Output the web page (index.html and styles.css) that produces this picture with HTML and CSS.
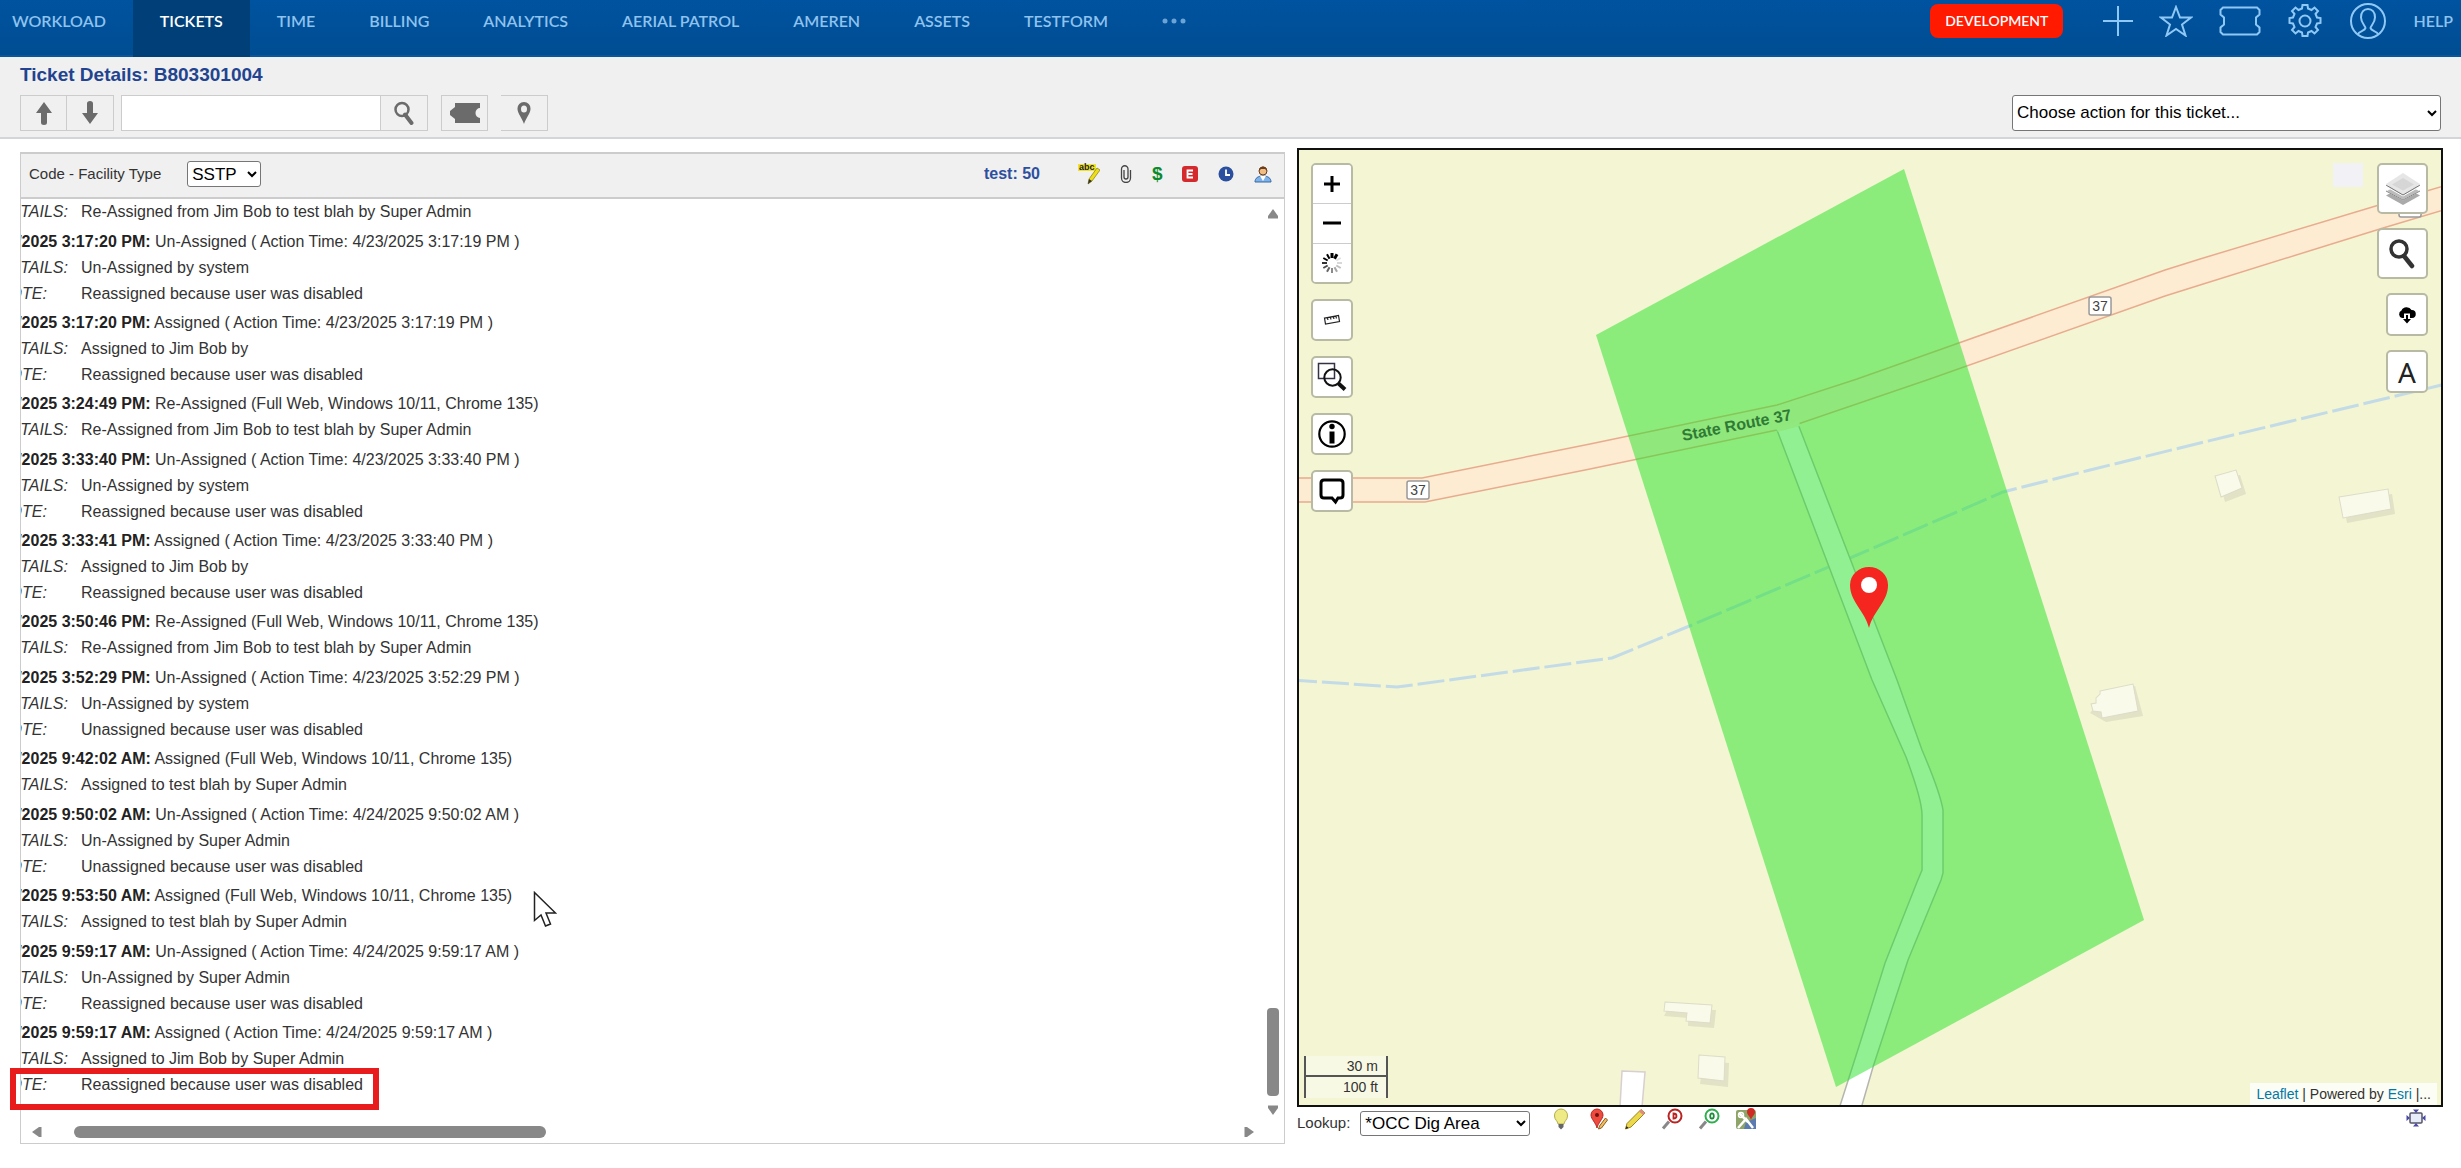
FILE: index.html
```html
<!DOCTYPE html>
<html lang="en">
<head>
<meta charset="utf-8">
<title>Ticket Details: B803301004</title>
<link rel="stylesheet" href="styles.css">
</head>
<body>
<header class="topbar">
  <nav class="nav">
    <a href="#">WORKLOAD</a>
    <a href="#" class="active">TICKETS</a>
    <a href="#">TIME</a>
    <a href="#">BILLING</a>
    <a href="#">ANALYTICS</a>
    <a href="#">AERIAL PATROL</a>
    <a href="#">AMEREN</a>
    <a href="#">ASSETS</a>
    <a href="#">TESTFORM</a>
    <a href="#" class="more" aria-label="More"><svg width="24" height="6" viewBox="0 0 24 6"><circle cx="3" cy="3" r="2.500"/><circle cx="12" cy="3" r="2.500"/><circle cx="21" cy="3" r="2.500"/></svg></a>
  </nav>
  <div class="tools">
    <span class="env">DEVELOPMENT</span>
    <a href="#" aria-label="Add"><svg width="30" height="30" viewBox="0 0 30 30"><path d="M15 0V30M0 15H30"/></svg></a>
    <a href="#" aria-label="Favorites"><svg width="34" height="32" viewBox="0 0 34 32"><path d="M17 2l4 10.500h11l-9 7 3.500 11L17 24l-9.500 6.500 3.500-11-9-7h11z"/></svg></a>
    <a href="#" aria-label="Tickets"><svg width="42" height="30" viewBox="0 0 42 30"><path d="M4 1.500H38L40.500 4V8.500L37 11.500V18.500L40.500 21.500V26L38 28.500H4L1.500 26V21.500L5 18.500V11.500L1.500 8.500V4z"/></svg></a>
    <a href="#" aria-label="Settings"><svg width="36" height="36" viewBox="0 0 36 36"><circle cx="18" cy="18" r="5.500"/><path d="M15 5.500L15.500 2h5l.5 3.500 3.500 1.500 3-2.500 3.500 3.500-2.500 3 1.500 3.500 3.500.5v5l-3.500.5-1.500 3.500 2.500 3-3.500 3.500-3-2.500-3.500 1.500-.5 3.500h-5l-.5-3.500-3.500-1.500-3 2.500-3.500-3.500 2.500-3L6 20.500 2.500 20v-5l3.500-.5L7.500 11 5 8l3.500-3.500 3 2.500z"/></svg></a>
    <a href="#" aria-label="Account"><svg width="38" height="38" viewBox="0 0 38 38"><circle cx="19" cy="19" r="17"/><path d="M9 32c1-3 7-3 7.500-6 0-2-4.500-5-4.500-10.500C12 10 15 7 19 7s7 3 7 8.500C26 21 21.500 24 21.500 26c.5 3 6.500 3 7.500 6"/></svg></a>
    <a href="#" class="help">HELP</a>
  </div>
</header>

<section class="subbar">
  <h1>Ticket Details: B803301004</h1>
  <div class="actions">
    <div class="btns">
      <button class="tb" aria-label="Previous"><svg width="18" height="24" viewBox="0 0 18 24"><path d="M9 1l8 11h-5v9.500a3 2.500 0 0 1-6 0V12H1z"/></svg></button><button class="tb" aria-label="Next"><svg width="18" height="24" viewBox="0 0 18 24"><path d="M9 23l8-11h-5V2.500a3 2.500 0 0 0-6 0V12H1z"/></svg></button>
    </div>
    <div class="btns">
      <input class="search" type="text" aria-label="Search tickets"><button class="tb" aria-label="Search"><svg width="22" height="24" viewBox="0 0 22 24"><circle cx="9" cy="8.500" r="6.500" fill="none" stroke="#6b6b6b" stroke-width="2.500"/><path d="M12 13.500l6.500 8.500" fill="none" stroke="#6b6b6b" stroke-width="4" stroke-linecap="round"/></svg></button>
    </div>
    <button class="tb alone" aria-label="Ticket"><svg width="32" height="20" viewBox="0 0 32 20"><path d="M6 0H31V5a4.500 5 0 0 0 0 10V20H6V16L1 12V8L6 4z"/></svg></button>
    <button class="tb alone" aria-label="Locate"><svg width="14" height="22" viewBox="0 0 14 22"><path fill-rule="evenodd" d="M7 0a6.500 6.500 0 0 1 6.500 7C13.500 11 9 16 7 22 5 16 .5 11 .5 7A6.500 6.500 0 0 1 7 0zm0 3.500a3 3.500 0 1 0 0 7 3 3.500 0 0 0 0-7z"/></svg></button>
    <select class="choose" aria-label="Ticket action"><option>Choose action for this ticket...</option></select>
  </div>
</section>

<main class="main">
  <section class="panel">
    <div class="panel-head">
      <label for="code">Code - Facility Type</label>
      <select id="code"><option>SSTP</option></select>
      <div class="head-icons">
        <b>test: 50</b>
        <svg width="22" height="22" viewBox="0 0 22 22"><path d="M0 1h18v7H0z" fill="#f0e22c"/><text x="1" y="7" class="abc">abc</text><path d="M19 5l3 2-8 11-4 3 1-5z" fill="#ecdf18" stroke="#8a7a08" stroke-width=".7"/><path d="M10 21l1-5 3 2z" fill="#333"/></svg>
        <svg width="12" height="18" viewBox="0 0 12 18"><path d="M4 5v7a2 2 0 0 0 4 0V4a3 3 0 0 0-6.500 0v9a4.500 4.500 0 0 0 9 0V5" fill="none" stroke="#444" stroke-width="1.300"/></svg>
        <span class="dollar">$</span>
        <svg width="16" height="16" viewBox="0 0 16 16"><rect width="16" height="16" rx="3" fill="#d42a2e"/><path d="M11 4.500H5.500v7H11M5.500 8h5" fill="none" stroke="#fff" stroke-width="1.800"/></svg>
        <svg width="16" height="16" viewBox="0 0 16 16"><circle cx="8" cy="8" r="7.500" fill="#2a4f9e"/><path d="M8 3.500V9h4" fill="none" stroke="#fff" stroke-width="1.800"/></svg>
        <svg width="18" height="18" viewBox="0 0 18 18"><path d="M1 17c0-4 3-6 8-6s8 2 8 6z" fill="#7fb2e8" stroke="#3668a8"/><path d="M6 11l3 5 3-5z" fill="#fff"/><circle cx="9" cy="6" r="4" fill="#f2bd85" stroke="#6b3d1a"/><path d="M5 6c0-6 8-6 8 0l-2-2H7z" fill="#6b3d1a"/></svg>
      </div>
    </div>
    <div class="log-wrap">
      <div class="log">
        <div class="details"><i>DETAILS:</i>Re-Assigned from Jim Bob to test blah by Super Admin</div>
        <div class="event"><b>4/23/2025 3:17:20 PM:</b> Un-Assigned ( Action Time: 4/23/2025 3:17:19 PM )</div>
        <div class="details"><i>DETAILS:</i>Un-Assigned by system</div>
        <div class="note"><i>NOTE:</i>Reassigned because user was disabled</div>
        <div class="event"><b>4/23/2025 3:17:20 PM:</b> Assigned ( Action Time: 4/23/2025 3:17:19 PM )</div>
        <div class="details"><i>DETAILS:</i>Assigned to Jim Bob by</div>
        <div class="note"><i>NOTE:</i>Reassigned because user was disabled</div>
        <div class="event"><b>4/23/2025 3:24:49 PM:</b> Re-Assigned (Full Web, Windows 10/11, Chrome 135)</div>
        <div class="details"><i>DETAILS:</i>Re-Assigned from Jim Bob to test blah by Super Admin</div>
        <div class="event"><b>4/23/2025 3:33:40 PM:</b> Un-Assigned ( Action Time: 4/23/2025 3:33:40 PM )</div>
        <div class="details"><i>DETAILS:</i>Un-Assigned by system</div>
        <div class="note"><i>NOTE:</i>Reassigned because user was disabled</div>
        <div class="event"><b>4/23/2025 3:33:41 PM:</b> Assigned ( Action Time: 4/23/2025 3:33:40 PM )</div>
        <div class="details"><i>DETAILS:</i>Assigned to Jim Bob by</div>
        <div class="note"><i>NOTE:</i>Reassigned because user was disabled</div>
        <div class="event"><b>4/23/2025 3:50:46 PM:</b> Re-Assigned (Full Web, Windows 10/11, Chrome 135)</div>
        <div class="details"><i>DETAILS:</i>Re-Assigned from Jim Bob to test blah by Super Admin</div>
        <div class="event"><b>4/23/2025 3:52:29 PM:</b> Un-Assigned ( Action Time: 4/23/2025 3:52:29 PM )</div>
        <div class="details"><i>DETAILS:</i>Un-Assigned by system</div>
        <div class="note"><i>NOTE:</i>Unassigned because user was disabled</div>
        <div class="event"><b>4/24/2025 9:42:02 AM:</b> Assigned (Full Web, Windows 10/11, Chrome 135)</div>
        <div class="details"><i>DETAILS:</i>Assigned to test blah by Super Admin</div>
        <div class="event"><b>4/24/2025 9:50:02 AM:</b> Un-Assigned ( Action Time: 4/24/2025 9:50:02 AM )</div>
        <div class="details"><i>DETAILS:</i>Un-Assigned by Super Admin</div>
        <div class="note"><i>NOTE:</i>Unassigned because user was disabled</div>
        <div class="event"><b>4/24/2025 9:53:50 AM:</b> Assigned (Full Web, Windows 10/11, Chrome 135)</div>
        <div class="details"><i>DETAILS:</i>Assigned to test blah by Super Admin</div>
        <div class="event"><b>4/24/2025 9:59:17 AM:</b> Un-Assigned ( Action Time: 4/24/2025 9:59:17 AM )</div>
        <div class="details"><i>DETAILS:</i>Un-Assigned by Super Admin</div>
        <div class="note"><i>NOTE:</i>Reassigned because user was disabled</div>
        <div class="event"><b>4/24/2025 9:59:17 AM:</b> Assigned ( Action Time: 4/24/2025 9:59:17 AM )</div>
        <div class="details"><i>DETAILS:</i>Assigned to Jim Bob by Super Admin</div>
        <div class="note"><i>NOTE:</i>Reassigned because user was disabled</div>
      </div>
      <div class="vbar">
        <svg width="12" height="10" viewBox="0 0 12 10"><path d="M6 0l5 7v2.500H1V7z"/></svg>
        <span class="vthumb"></span>
        <svg width="12" height="10" viewBox="0 0 12 10"><path d="M6 10l5-7V.5H1V3z"/></svg>
      </div>
    </div>
    <div class="hbar">
      <svg width="10" height="12" viewBox="0 0 10 12"><path d="M0 6l7-5h2.500v10H7z"/></svg>
      <span class="hthumb"></span>
      <svg width="10" height="12" viewBox="0 0 10 12"><path d="M10 6L3 1H.5v10H3z"/></svg>
    </div>
    <div class="highlight"></div>
    <svg class="cursor" width="24" height="38" viewBox="0 0 24 38"><path d="M1.500 1.500v28l6.500-5.500 4.500 11 5-2-4.500-11h9.500z" fill="#fff" stroke="#222" stroke-width="1.500"/></svg>
  </section>

  <section class="mapcol">
    <div class="map">
      <svg class="canvas" viewBox="1299 150 1142 955" preserveAspectRatio="xMidYMid slice">
        <g class="river"><path d="M1290 680L1397 687 1612 658 1687 627 1850 558 2003 492 2090 470 2200 443 2450 383"/></g>
        <path class="hwy" d="M1290 478H1422L1590 444 1777 405 1857 379 2165 270 2200 259 2379 205 2450 184V208L2383 228 2200 285 2165 296 1927 380 1798 424 1777 430 1590 469 1425 502H1290z"/>
        <path class="road" d="M1777 430L1872 680 1906 757Q1922 800 1922 815V870L1917 882 1885 963 1860 1043 1838 1112H1860L1873 1067 1908 960 1941 880 1943 873V810Q1940 792 1922 750L1897 680 1798 424"/>
        <path d="M1776 428L1799 420 1800 426 1778 432z" fill="#fdeed6"/>
        <path class="drive" d="M1622 1071l23 1-3 35h-22z"/>
        <g class="shadow"><path d="M2219 481l21-6 6 19-21 8zM2343 502l49-8 3 20-48 9zM2104 696l31-10 8 30-37 6-16-9zM1668 1008l48 2-2 18-26-2v-8l-24-2zM1703 1061l26 2-1 24-28-3z"/></g>
        <g class="bldg"><path d="M2215 476l21-6 6 18-21 9zM2339 497l49-8 3 20-48 9zM2100 691l33-7 5 27-36 7-1-6-8-1-2-7 5-1v-5l4-4zM1665 1002l47 3-2 18-24-2 1-8-23-2zM1699 1055l26 2-1 24-26-3z"/></g>
        <path class="dig" d="M1904 169L1596 335 1836 1087 2144 920z"/>
        <g class="shield"><rect x="1407" y="481" width="22" height="18" rx="2"/><text x="1418" y="495">37</text><rect x="2089" y="297" width="22" height="18" rx="2"/><text x="2100" y="311">37</text><rect x="2399" y="199" width="22" height="18" rx="2"/><text x="2410" y="213">37</text></g>
        <text class="rname" transform="translate(1683 441) rotate(-11)">State Route 37</text>
        <path fill="#f5261f" d="M1869 628C1865 611 1850 602 1850 585a19 18 0 0 1 38 0C1888 602 1873 611 1869 628z"/><circle cx="1869" cy="585" r="8" fill="#fff"/>
      </svg>
      <div class="ctl left">
        <div class="stack">
          <button aria-label="Zoom in"><svg width="18" height="18" viewBox="0 0 18 18"><path d="M9 1v16M1 9h16" stroke="#000" stroke-width="3"/></svg></button>
          <button aria-label="Zoom out"><svg width="18" height="18" viewBox="0 0 18 18"><path d="M0 9h18" stroke="#000" stroke-width="3"/></svg></button>
          <button aria-label="Loading"><svg width="20" height="20" viewBox="-10 -10 20 20" stroke="#000" stroke-width="2"><path d="M0-5v-5" stroke-width="3"/><path d="M2.500-4.300L5-8.700" stroke-width="3"/><path d="M-2.500-4.300L-5-8.700"/><path d="M-4.300-2.500L-8.700-5"/><path d="M-5 0h-5" opacity=".8"/><path d="M-4.300 2.500L-8.700 5" opacity=".7"/><path d="M-2.500 4.300L-5 8.700" opacity=".6"/><path d="M0 5v5" opacity=".45"/><path d="M2.500 4.300L5 8.700" opacity=".35"/><path d="M4.300 2.500L8.700 5" opacity=".25"/><path d="M5 0h5" opacity=".15"/><path d="M4.300-2.500L8.700-5" opacity=".12"/></svg></button>
        </div>
        <button class="one" aria-label="Measure"><svg width="18" height="12" viewBox="0 0 18 12"><path d="M1.500 4L15.500 1.500l1 6-14 2.500zM4.500 3.500l.4 2.500M7.500 3l.4 2.500M10.500 2.500l.4 2.500M13 2l.4 2.500" fill="none" stroke="#222" stroke-width="1.200"/></svg></button>
        <button class="one" aria-label="Zoom to area"><svg width="30" height="30" viewBox="0 0 30 30" fill="none" stroke="#111"><path d="M1.500 1.500h16v15h-16z" stroke-width="1.500" stroke="#334"/><circle cx="15.500" cy="15.500" r="8.200" stroke-width="2"/><path d="M21.500 21.500l6.500 6" stroke-width="4"/></svg></button>
        <button class="one" aria-label="Information"><svg width="28" height="28" viewBox="0 0 28 28"><circle cx="14" cy="14" r="12.700" fill="none" stroke="#000" stroke-width="2.200"/><circle cx="14" cy="6.500" r="2.700"/><path d="M11.500 11.500h5V23.500h-5z"/></svg></button>
        <button class="one" aria-label="Comment"><svg width="28" height="28" viewBox="0 0 28 28"><path d="M6 3H22Q25 3 25 6V18Q25 21 22 21H20L17.500 25 14 21H6Q3 21 3 18V6Q3 3 6 3z" fill="none" stroke="#000" stroke-width="3"/></svg></button>
      </div>
      <div class="ctl right">
        <div class="pair"><span class="blank"></span><button class="big" aria-label="Layers"><svg width="36" height="34" viewBox="0 0 36 34"><path d="M18 14L1 23.500 18 33 35 23.500z" fill="#aaa"/><path d="M18 10L1 19 18 28 35 19z" fill="#bbb" stroke="#fff"/><path d="M1 19L18 28 35 19" stroke="#888" fill="none"/><path d="M18 5L1 14.500 18 24 35 14.500z" fill="#ddd" stroke="#fff"/><path d="M1 13L18 23 35 13" stroke="#777" fill="none"/><path d="M18 1L1 12 18 22 35 12z" fill="#e6e6e6"/><path d="M18 6L7 12.500 18 18.500 29 12.500z" fill="#d6d6d6"/></svg></button></div>
        <button class="big" aria-label="Search map"><svg width="32" height="32" viewBox="0 0 32 32" fill="none" stroke="#333"><circle cx="12" cy="11" r="8" stroke-width="3.500"/><path d="M17 18l8 10" stroke-width="4.500" stroke-linecap="round"/></svg></button>
        <button class="one" aria-label="Download"><svg width="18" height="18" viewBox="0 0 18 18"><path d="M4 12a4 4 0 0 1-.5-7.500 5.500 5 0 0 1 10-.5A4 4 0 0 1 14 12z"/><path d="M6 13V7.500h6V13z" fill="#fff"/><path d="M8 9h2v4h3l-4 4.500L5 13h3z"/></svg></button>
        <button class="one letter">A</button>
      </div>
      <div class="scale"><span class="m">30 m</span><span class="ft">100 ft</span></div>
      <div class="credit"><a href="#">Leaflet</a> | Powered by <a href="#">Esri</a> |...</div>
    </div>
    <div class="lookup">
      <label for="look">Lookup:</label>
      <select id="look"><option>*OCC Dig Area</option></select>
      <div class="look-icons">
        <svg width="22" height="22" viewBox="-3 0 22 22"><path d="M8 1a6.500 6.500 0 0 1 6.500 7c0 4-3.500 5-3.500 8H5c0-3-3.500-4-3.500-8A6.500 6.500 0 0 1 8 1z" fill="#eeea86" stroke="#b5ad4a"/><path d="M5.500 16h5v3L8 21.500 5.500 19z" fill="#666"/></svg>
        <svg width="22" height="22" viewBox="-3 0 22 22"><path d="M7 1a6 6 0 0 1 6 6c0 4-5 8-6 13C6 15 1 11 1 7a6 6 0 0 1 6-6z" fill="#ef4a3e" stroke="#b5261e"/><circle cx="7" cy="7" r="2" fill="#6b1410"/><path d="M15.500 10l2 2-6 8-3 1 1-3z" fill="#f0c060" stroke="#8a5a20"/></svg>
        <svg width="22" height="22" viewBox="0 0 22 22"><path d="M17 1.500l4 3.500L7 19l-5.500 2L3 15.500z" fill="#ecd94a" stroke="#9c8420"/><path d="M17 1.500l4 3.500-2 2-4-3.500z" fill="#e08a80"/><path d="M1.500 21l1-3 2 2z" fill="#222"/></svg>
        <svg width="22" height="22" viewBox="0 0 22 22"><path d="M8 13.500l-6 7" stroke="#888" stroke-width="3"/><circle cx="14" cy="8" r="6.500" fill="#fff" stroke="#b22" stroke-width="2"/><path d="M12.500 5.500v5c4 0 4-5 0-5z" fill="none" stroke="#b22" stroke-width="1.800"/></svg>
        <svg width="22" height="22" viewBox="0 0 22 22"><path d="M8 13.500l-6 7" stroke="#888" stroke-width="3"/><circle cx="14" cy="8" r="6.500" fill="#fff" stroke="#2eae4e" stroke-width="2"/><ellipse cx="14" cy="8" rx="1.800" ry="2.600" fill="none" stroke="#1c8a38" stroke-width="1.800"/></svg>
        <svg width="22" height="22" viewBox="0 0 22 22"><rect x="1" y="2" width="20" height="19" rx="2" fill="#8ea468"/><path d="M11 14l10-4v11h-12z" fill="#5b7bb0"/><path d="M3 20l8-9 7 9M4 5l9 9" stroke="#fff" stroke-width="2.500" fill="none"/><circle cx="6" cy="7" r="2.500" fill="none" stroke="#fff" stroke-width="1.500"/><path d="M16 0a4 4 0 0 1 4 4c0 3-3 4-4 8-1-4-4-5-4-8a4 4 0 0 1 4-4z" fill="#d02a24"/></svg>
      </div>
      <svg class="expand" width="20" height="18" viewBox="0 0 20 18"><rect x="4" y="4" width="12" height="10" rx="1" fill="#e8ecf8" stroke="#556" stroke-width="1.500"/><path d="M7 .5h6L10 4zM7 17.500h6L10 14zM.5 6v6L4 9zM19.500 6v6L16 9z" fill="#4a4aa8"/></svg>
    </div>
  </section>
</main>
</body>
</html>
```
FILE: styles.css
```css
* { box-sizing: border-box; }

body {
  margin: 0;
  min-height: 100vh;
  display: flex;
  flex-direction: column;
  background: #fff;
  color: #333;
  font: 16px/26px "Liberation Sans", Arial, sans-serif;
}

button { padding: 0; font: inherit; cursor: pointer; display: flex; align-items: center; justify-content: center; }
svg { display: block; flex: none; }

/* Top navigation */
.topbar {
  height: 57px;
  display: flex;
  justify-content: space-between;
  background: linear-gradient(#0053a0, #004d92);
  border-bottom: 2px solid #0a559c;
  font: 600 16px/42px Lato, "Open Sans", sans-serif;
}
.topbar a { color: #8fc3ee; text-decoration: none; }
.nav { display: flex; margin-left: -15px; }
.nav a { padding: 0 27px; }
.nav .active { background: #003f78; color: #fff; height: 57px; }
.nav .more { display: flex; align-items: center; height: 42px; }
.more svg { fill: #6ba3d6; }
.tools { display: flex; align-items: center; gap: 26px; height: 42px; padding-right: 8px; }
.tools svg { fill: none; stroke: #8fc8f5; stroke-width: 2; }
.env {
  height: 34px;
  line-height: 34px;
  padding: 0 15px;
  margin-right: 14px;
  border-radius: 8px;
  background: #ff1a00;
  color: #fff;
  font-size: 14px;
}

/* Ticket title and toolbar */
.subbar {
  padding: 5px 20px 6px;
  background: #f0f0f0;
  border-bottom: 2px solid #d3d5d8;
}
h1 { margin: 0 0 6px; font-size: 19px; line-height: 26px; color: #22438f; }
.actions { display: flex; align-items: center; height: 37px; }
.btns { display: flex; margin-right: 7px; }
.tb { width: 47px; height: 36px; border: 1px solid #ccc; background: #f0f0f0; }
.tb + .tb, .search + .tb { border-left: 0; }
.tb svg { fill: #6b6b6b; }
.alone { margin: 0 7px 0 6px; }
.search { width: 260px; height: 36px; border: 1px solid #ccc; background: #fff; font: inherit; }
select {
  color: #000;
  background: #fff;
  border: 1px solid #767676;
  border-radius: 3px;
  font: 17px "Liberation Sans", Arial, sans-serif;
}
.choose { width: 429px; height: 36px; margin-left: auto; }

/* Two columns */
.main {
  flex: 1;
  display: flex;
  gap: 12px;
  padding: 9px 18px 24px 20px;
}
.panel { position: relative; flex: 1264; margin-top: 4px; border: 1px solid #ccc; display: flex; flex-direction: column; min-width: 0; }
.panel-head {
  display: flex;
  align-items: center;
  height: 46px;
  padding: 0 12px 3px 8px;
  background: #f0f0f0;
  border-top: 1px solid #ccc;
  border-bottom: 2px solid #ccc;
}
.panel-head select { width: 74px; height: 26px; margin-left: 26px; }
.panel-head label, .lookup label { font-size: 15px; }
.head-icons { margin-left: auto; display: flex; align-items: center; gap: 20px; }
.head-icons b { color: #2d4f9e; margin-right: 18px; }
.abc { font: bold 9px "Liberation Sans", Arial, sans-serif; fill: #222; }
.dollar { width: 10px; font-weight: bold; font-size: 19px; color: #0b8a2c; }

/* Event log, scrolled sideways */
.log-wrap { flex: 1; display: flex; }
.log { flex: 1; overflow: hidden; white-space: nowrap; }
.log div { margin-left: -23px; }
.log .event { margin: 4px 0 0 -35px; }
.log b { color: #222; }
.log i { display: inline-block; width: 83px; }
.note { line-height: 25px; }

.vbar { width: 22px; padding: 10px 4px 6px; display: flex; flex-direction: column; align-items: center; fill: #888; }
.vthumb { width: 12px; height: 88px; margin: auto 0 9px; border-radius: 4px; background: #888; }
.hbar { height: 22px; padding: 0 30px 0 11px; display: flex; align-items: center; fill: #888; }
.hthumb { width: 472px; height: 12px; margin: 0 auto 0 32px; border-radius: 6px; background: #888; }

.highlight { position: absolute; left: -11px; bottom: 33px; width: 369px; height: 42px; border: 6px solid #e81c1c; }
.cursor { position: absolute; left: 512px; top: 738px; }

/* Map */
.mapcol { flex: 1147; display: flex; flex-direction: column; min-width: 0; }
.map { position: relative; height: 959px; border: 2px solid #111; background: #f3f5d3; overflow: hidden; }
.canvas { position: absolute; inset: 0; width: 100%; height: 100%; }
.hwy { fill: #fdebd2; stroke: #e9ab8e; stroke-width: 1.500; }
.river path { fill: none; stroke: #c2dbe6; stroke-width: 3; stroke-dasharray: 27 5; }
.road { fill: #fff; stroke: #b5b5b0; stroke-width: 1.500; }
.drive { fill: #fff; stroke: #d8cfd0; stroke-width: 1.500; }
.shadow { fill: #e2e2c6; }
.bldg { fill: #fafaea; stroke: #dcdcc8; }
.dig { fill: rgb(36 227 37 / 50%); }
.shield rect { fill: #fff; stroke: #999; stroke-width: 1.500; }
.shield text { font: 14px "Liberation Sans", Arial, sans-serif; fill: #444; text-anchor: middle; }
.rname { font: bold 16px "Liberation Sans", Arial, sans-serif; fill: #2f7a35; }

.ctl { position: absolute; top: 13px; display: flex; flex-direction: column; gap: 15px; }
.left { left: 12px; }
.right { right: 13px; align-items: flex-end; gap: 14px; }
.stack, .one, .big { border: 2px solid #b9baa4; border-radius: 5px; background: #fff; }
.stack { width: 42px; height: 121px; display: flex; flex-direction: column; overflow: hidden; }
.stack button { flex: 1; border: 0; background: #fff; }
.stack button + button { border-top: 1px solid #ccc; }
.one { width: 42px; height: 42px; }
.big { width: 51px; height: 51px; }
.right .one { height: 43px; }
.letter { font: 28px "Noto Sans", sans-serif; color: #222; }
.pair { display: flex; gap: 14px; }
.blank { width: 30px; height: 24px; background: #f2f1f5; }

.scale { position: absolute; left: 5px; bottom: 7px; width: 84px; display: flex; flex-direction: column; font-size: 14px; line-height: 20px; text-align: right; }
.scale span { height: 21px; padding-right: 8px; border: 2px solid #555; border-top: 0; background: rgb(255 255 255 / 40%); }
.scale .ft { border-bottom: 0; }
.credit { position: absolute; right: 4px; bottom: 0; padding: 0 6px; background: rgb(255 255 255 / 75%); font-size: 14px; line-height: 22px; }
.credit a { color: #0078a8; text-decoration: none; }

.lookup { display: flex; align-items: flex-start; padding-top: 1px; }
.lookup label { margin-top: 2px; }
.lookup select { width: 170px; height: 25px; margin: 3px 20px 0 10px; }
.look-icons { display: flex; gap: 15px; }
.expand { margin: 1px 17px 0 auto; }
```
